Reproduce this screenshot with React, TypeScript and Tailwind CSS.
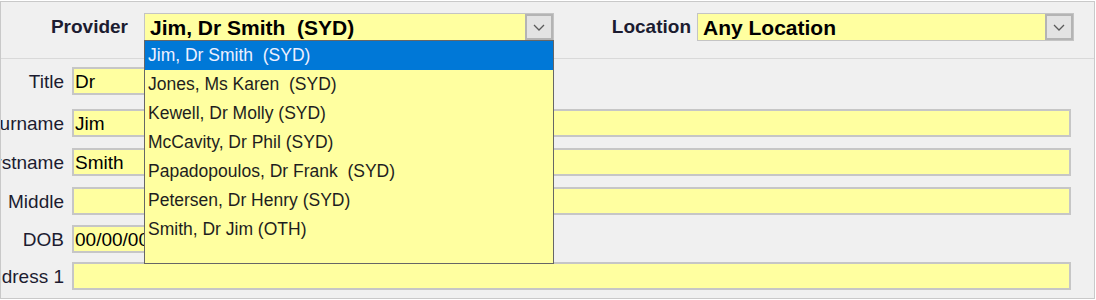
const providers = [
  "Jim, Dr Smith  (SYD)",
  "Jones, Ms Karen  (SYD)",
  "Kewell, Dr Molly (SYD)",
  "McCavity, Dr Phil (SYD)",
  "Papadopoulos, Dr Frank  (SYD)",
  "Petersen, Dr Henry (SYD)",
  "Smith, Dr Jim (OTH)",
];

const fields = [
  { label: "Title", value: "Dr", width: "w-[140px]", mt: "mt-[8px]" },
  { label: "Surname", value: "Jim", width: "w-[999px]", mt: "mt-[14px]" },
  { label: "Firstname", value: "Smith", width: "w-[999px]", mt: "mt-[11px]" },
  { label: "Middle", value: "", width: "w-[999px]", mt: "mt-[11px]" },
  { label: "DOB", value: "00/00/0000", width: "w-[180px]", mt: "mt-[10px]" },
  { label: "Address 1", value: "", width: "w-[999px]", mt: "mt-[9px]" },
];

function Chevron() {
  return (
    <div className="w-[28px] h-full flex items-center justify-center bg-[#e3e3e3] border-2 border-[#b4b4b4] shrink-0">
      <svg width="12" height="7" viewBox="0 0 12 7" fill="none">
        <path d="M1 1L6 6L11 1" stroke="#5a5a5a" strokeWidth="1.3" />
      </svg>
    </div>
  );
}

function Select({ value, className }: { value: string; className: string }) {
  return (
    <div className={`h-[28px] flex items-stretch bg-[#ffffa0] border border-[#c4c4c4] ${className}`}>
      <div className="flex-1 flex items-center pl-[5px] text-[21px] font-bold text-black whitespace-pre leading-none">
        {value}
      </div>
      <Chevron />
    </div>
  );
}

export default function App() {
  return (
    <div className="relative w-[1096px] h-[300px] bg-white overflow-hidden" style={{ fontFamily: '"Liberation Sans", Arial, sans-serif' }}>
      <div className="mt-[1px] w-[1095px] h-[298px] border border-[#c9c9c9] bg-[#f0f0f0] flex flex-col">
        <div className="h-[57px] flex items-start pt-[11px] border-b border-[#d9d9d9] shrink-0">
          <div className="w-[127px] h-[28px] flex items-center justify-end text-[19px] font-bold text-[#1c1c30]">Provider</div>
          <Select value="Jim, Dr Smith  (SYD)" className="ml-[16px] w-[410px]" />
          <div className="w-[137px] h-[28px] flex items-center justify-end text-[19px] font-bold text-[#1c1c30]">Location</div>
          <Select value="Any Location" className="ml-[6px] w-[377px]" />
        </div>
        <div className="flex flex-col">
          {fields.map((f) => (
            <div key={f.label} className={`flex items-center h-[28px] ${f.mt}`}>
              <div className="w-[63px] flex justify-end overflow-hidden shrink-0">
                <span className="text-[19px] text-[#1c1c30] whitespace-nowrap leading-none">{f.label}</span>
              </div>
              <div className={`ml-[8px] h-[28px] ${f.width} bg-[#ffffa0] border-2 border-[#c6c6c6] flex items-center pl-[1px] text-[19px] text-black leading-none overflow-hidden whitespace-nowrap`}>
                {f.value}
              </div>
            </div>
          ))}
        </div>
      </div>

      <div className="absolute left-[144px] top-[40px] w-[410px] h-[224px] bg-[#ffffa0] border border-[#666666] flex flex-col">
        {providers.map((p, i) => (
          <div
            key={p}
            className={`h-[29px] flex items-center pl-[3px] text-[17.5px] whitespace-pre leading-none ${i === 0 ? "bg-[#0078d7] text-[#eef0ff]" : "text-[#1e1e1e]"}`}
          >
            {p}
          </div>
        ))}
      </div>
    </div>
  );
}
